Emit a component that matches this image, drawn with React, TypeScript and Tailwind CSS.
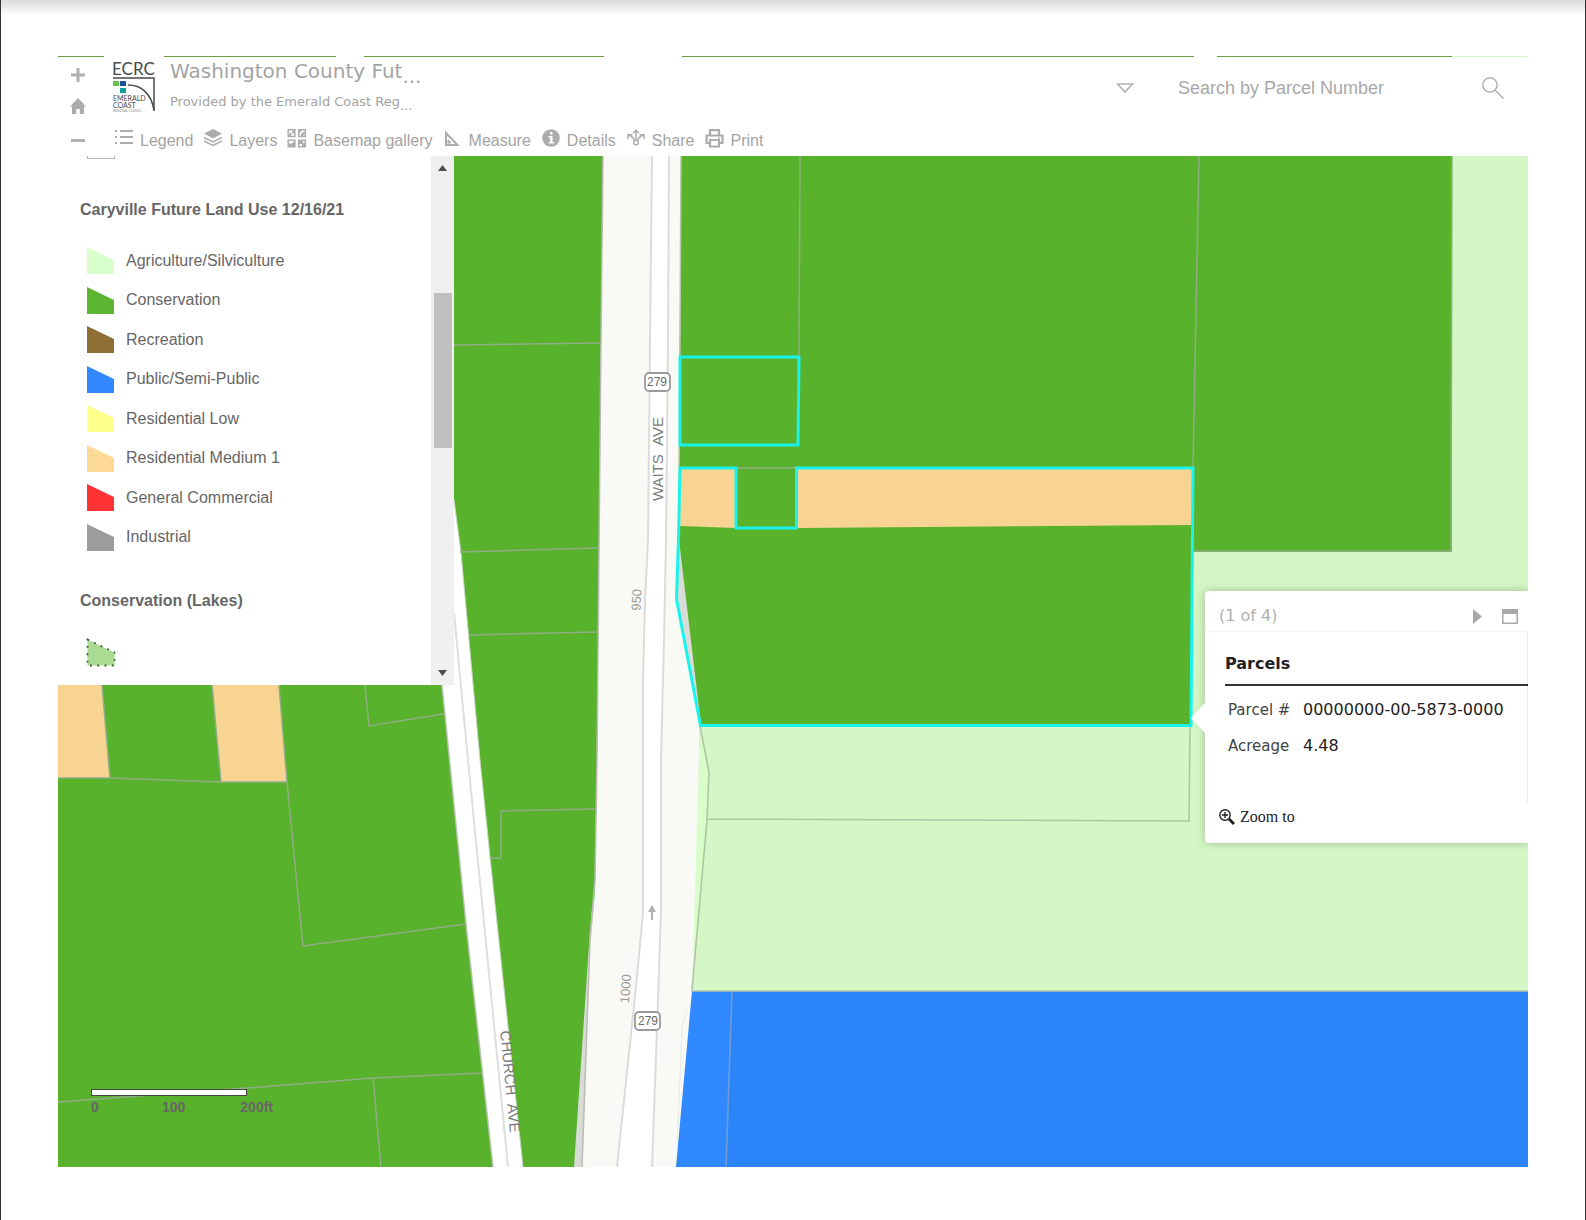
import React from 'react';

const LEGEND_ITEMS = [
  { label: 'Agriculture/Silviculture', color: '#d9ffcc' },
  { label: 'Conservation', color: '#5cb531' },
  { label: 'Recreation', color: '#8f6f35' },
  { label: 'Public/Semi-Public', color: '#3289ff' },
  { label: 'Residential Low', color: '#ffff8c' },
  { label: 'Residential Medium 1', color: '#fdda96' },
  { label: 'General Commercial', color: '#ff3333' },
  { label: 'Industrial', color: '#9c9c9c' },
];

const ListIcon = () => (
  <svg width="20" height="20" viewBox="0 0 20 20" fill="#acacac">
    <path d="M1 1h2v2H1zM1 7h2v2H1zM1 13h2v2H1zM6 1h13v2H6zM6 7h13v2H6zM6 13h13v2H6z" />
  </svg>
);

const LayersIcon = () => (
  <svg width="20" height="20" viewBox="0 0 20 20" fill="none" stroke="#acacac" strokeWidth="1.4">
    <path d="M10 0 19 4.500l-9 5-9-5z" fill="#acacac" stroke="none" />
    <path d="M1 8.500l9 4.500 9-4.500M1 12l9 4.500 9-4.500" />
  </svg>
);

const BasemapIcon = () => (
  <svg width="20" height="20" viewBox="0 0 20 20" fill="none" stroke="#acacac" strokeWidth="1.5">
    <path d="M1.2 .8h6.600v6.600H1.2zM11.7 .8h6.600v6.600h-6.600zM1.2 11.2h6.600v6.600H1.2zM11.7 11.2h6.600v6.600h-6.600z" />
    <path d="M1.500 7l2-4 1 2 1-3h2v3l-2-1-2 3zM12 1h3l-3 4zM14 7c0-3 1-4 4-4v1l-2 3zM2 17.500v-3h3l3-3v6zM12 12h4v2h2v4h-3v-3h-3z" fill="#acacac" stroke="none" />
  </svg>
);

const MeasureIcon = () => (
  <svg width="20" height="20" viewBox="0 0 20 20" fill="none" stroke="#acacac" strokeWidth="2">
    <path d="M3 4v12h11.500zM5.500 11v2.500H8" />
  </svg>
);

const InfoIcon = () => (
  <svg width="20" height="20" viewBox="0 0 20 20">
    <circle cx="10" cy="9" r="8.800" fill="#acacac" />
    <path d="M9 3h2.500v2.500H9zM7.500 7h4v6H13v1.500H7.500V13H9V8.500H7.500z" fill="#fff" />
  </svg>
);

const ShareIcon = () => (
  <svg width="20" height="20" viewBox="0 0 20 20" fill="none" stroke="#acacac" strokeWidth="1.500">
    <path d="M10 11V1.500M7.200 4 10 1.200 12.800 4M8.500 12C8 9 5.500 7 2.500 6.200M2 10V5.700h4.500M11.500 12c.5-3 3-5 6-5.800M18 10V5.700h-4.500" />
    <circle cx="10" cy="13.500" r="2.300" />
  </svg>
);

const PrintIcon = () => (
  <svg width="20" height="20" viewBox="0 0 20 20" fill="none" stroke="#acacac" strokeWidth="2.200">
    <path d="M6 6V1.200h9V6M6 14H2.500V6.500h16V14H15M6 11h9v6.500H6z" />
    <path d="M14 8.800h2" strokeWidth="1.200" />
  </svg>
);

const TOOLS = [
  { label: 'Legend', Icon: ListIcon },
  { label: 'Layers', Icon: LayersIcon },
  { label: 'Basemap gallery', Icon: BasemapIcon },
  { label: 'Measure', Icon: MeasureIcon },
  { label: 'Details', Icon: InfoIcon },
  { label: 'Share', Icon: ShareIcon },
  { label: 'Print', Icon: PrintIcon },
];

const Logo = () => (
  <svg className="-ml-1" width="48" height="54" viewBox="-3 -2 48 54" fontFamily="Lato, sans-serif" fill="#4a4a4a">
    <text x="-1" y="13" fontSize="17">ECRC</text>
    <path d="M0 16h41v33" fill="none" stroke="#4a4a4a" strokeWidth="1.500" />
    <path d="M15 23c13 0 23 8 26 25" fill="none" stroke="#4a4a4a" strokeWidth="1.500" />
    <rect y="19" width="6" height="5" fill="#6cbf45" />
    <rect x="7" y="19" width="6" height="5" fill="#17569b" />
    <rect x="7" y="26" width="6" height="5" fill="#0ca0a0" />
    <text x="0" y="39" fontSize="7">EMERALD</text>
    <text x="0" y="46" fontSize="7">COAST</text>
    <text x="0" y="50" fontSize="3" fill="#888">REGIONAL COUNCIL</text>
  </svg>
);

const MapCanvas = () => (
  <svg
    className="absolute inset-0 h-full w-full"
    viewBox="58 156 1470 1011"
    preserveAspectRatio="xMinYMin slice"
    fontFamily="'Liberation Sans', Arial, sans-serif"
  >
    <rect x="58" y="156" width="1470" height="1011" fill="#59b22c" />

    {/* agriculture */}
    <path d="M1452 156h76v840H690l10-270h491l2-174h259z" fill="#d5f7c5" />
    <path d="M700 726l9 46-2 48-15 171h-2l8-190z" fill="#d8ffca" />

    {/* public */}
    <path d="M691 991h837v176H676z" fill="#2c85f8" />
    <path d="M691 991h41l-6 176h-50z" fill="#3089ff" />

    {/* residential */}
    <path d="M680 468h56v60l-56-2zM797 468h396v57l-396 3zM58 685h44l8 93H58zM212 685h67l8 97h-66z" fill="#f8d492" />

    {/* highway corridor */}
    <path d="M595 880l-5 50-16 237h10l8-237z" fill="#d9dcd6" />
    <path d="M679 540l22 185-24-125z" fill="#d9dcd6" />
    <path d="M603 156l-2 184-4 420-2 130-5 60-8 217h94l16-176 7-230 1-35-24-127 2-60 1-80 2-303z" fill="#f9faf6" />
    <path d="M603 156l-2 184-4 420-2 120-5 60-8 227" fill="none" stroke="#b9bcb4" strokeWidth="1.500" />
    <path d="M681 156l-1 184-1 128" fill="none" stroke="#b9c4b0" strokeWidth="1.500" />
    <path d="M652 156l-2 184-2 200-3 60-2 80v234l-9 92-17 161h35l6-167 3-90V760l3-120 2-100 2-200 1-184z" fill="#fff" />
    <path
      d="M652 156l-2 184-2 200-3 60-2 80v234l-9 92-17 161M652 1167l6-167 3-90V760l3-120 2-100 2-200 1-184"
      fill="none"
      stroke="#dcdcdc"
      strokeWidth="2"
    />
    <path d="M687 1010l-5 18-5 122" fill="none" stroke="#e9eae2" strokeWidth="1" />

    {/* church ave */}
    <path d="M430 500h24l7 53 19 207 10 97 33 310h-30l-27-243-24-239-12-100z" fill="#fff" />
    <path d="M442 685l24 239 27 243" fill="none" stroke="#b9c4b0" strokeWidth="1.500" />
    <path d="M454 500l7 53 19 207 10 97 33 310" fill="none" stroke="#c9d8c0" strokeWidth="1" />
    <path d="M454 613l14 147 40 407" fill="none" stroke="#dedede" strokeWidth="2" />

    {/* parcel lines */}
    <g fill="none" stroke="#8fae84" strokeWidth="1.500">
      <path d="M454 345l147-2M460 552l138-4M469 635l128-3M490 858h11v-47l95-2" />
      <path d="M58 778h52l111 4h66l16 164 163-22M110 778l-8-93M221 782l-9-97M287 782l-8-97" />
      <path d="M365 685l4 41 74-12M58 1102l189-14 126-10 109-5M373 1078l8 89" />
      <path d="M800 156l-1 200M1199 156l-6 312M736 468h61M1452 156l-1 395h-258" />
    </g>
    <g fill="none" stroke="#afc5a6" strokeWidth="1.600">
      <path d="M700 726l9 46-2 48-15 170M707 819l482 2 1-94M691 991h837" />
    </g>
    <path d="M732 992l-6 175" stroke="#6d9fd6" strokeWidth="1.500" />

    {/* selected parcels */}
    <g fill="none" stroke="#18f4ec" strokeWidth="3">
      <path d="M680 357h119l-1 88H680z" />
      <path d="M680 468h56v60h60.500v-60h396.500l-2 257.500H700.500L676.500 599l2-60z" />
    </g>

    {/* road labels */}
    <g fontSize="15" fill="#7c7c7c" textAnchor="middle">
      <text transform="translate(663 459) rotate(-90)">WAITS{'\u00a0\u00a0'}AVE</text>
      <text transform="translate(505 1082) rotate(84.500)">CHURCH{'\u00a0\u00a0'}AVE</text>
    </g>
    <g fontSize="13" fill="#9a9a9a" textAnchor="middle">
      <text transform="translate(641 600) rotate(-88)">950</text>
      <text transform="translate(630 989) rotate(-86)">1000</text>
    </g>
    <g fill="#fff" stroke="#9a9a9a" strokeWidth="1.800">
      <rect x="645" y="373" width="25" height="18" rx="4" />
      <rect x="635" y="1012" width="25" height="18" rx="4" />
    </g>
    <g fontSize="12" fill="#666" textAnchor="middle">
      <text x="657" y="386">279</text>
      <text x="648" y="1025">279</text>
    </g>
    <path d="M652 905l4 7h-3v8h-2v-8h-3z" fill="#b0b0b0" />
  </svg>
);

const LegendPanel = () => (
  <aside className="relative flex h-[529px] w-[396px] bg-white text-base leading-6 text-[#666]">
    <div className="flex-1 overflow-hidden pl-[22px]">
      <div className="ml-[7px] h-[3px] w-7 border border-t-0 border-[#b5b5b5]" />
      <h2 className="mt-[39px] font-bold">Caryville Future Land Use 12/16/21</h2>
      <ul className="mt-[19px] flex h-[316px] flex-col">
        {LEGEND_ITEMS.map(({ label, color }) => (
          <li key={label} className="flex flex-1 items-center gap-3 pl-[7px]">
            <svg width="27" height="27" viewBox="0 0 27 27">
              <path d="M0 0l27 13v14H0z" fill={color} />
            </svg>
            {label}
          </li>
        ))}
      </ul>
      <h2 className="mt-8 font-bold">Conservation (Lakes)</h2>
      <svg className="mt-[25px] ml-1.5" width="30" height="30" viewBox="0 0 30 30">
        <path d="M1.500 1.500l27 13v13h-27z" fill="#a9db92" stroke="#3c5a32" strokeWidth="1.800" strokeDasharray="1.800 5.500" />
      </svg>
    </div>
    <div className="flex w-[23px] flex-col items-center bg-[#f0f0f0] pt-[9px] pb-[9px]">
      <svg width="9" height="6" viewBox="0 0 9 6">
        <path d="M0 6l4.500-6L9 6z" fill="#4d4d4d" />
      </svg>
      <div className="mt-[122px] h-[155px] w-[18px] bg-[#c0c0c0]" />
      <svg className="mt-auto" width="9" height="6" viewBox="0 0 9 6">
        <path d="M0 0l4.500 6L9 0z" fill="#4d4d4d" />
      </svg>
    </div>
  </aside>
);

const ParcelPopup = () => (
  <section className="absolute top-[435px] right-0 h-[252px] w-[323px] rounded-l bg-white font-['DejaVu_Sans',Verdana,sans-serif] text-base text-[#222] shadow-[0_0_10px_rgba(0,0,0,0.25)]">
    <svg className="absolute top-28 -left-[14px]" width="14" height="30" viewBox="0 0 14 30">
      <path d="M14 0v30L0 15z" fill="#fff" />
    </svg>
    <div className="flex h-[41px] items-center border-b border-[#f7f7f7] pt-2.5 pr-2.5 pl-3.5 text-[#b0b0b0]">
      <span className="flex-1">(1 of 4)</span>
      <button aria-label="Next feature" className="mr-5">
        <svg width="9" height="15" viewBox="0 0 9 15">
          <path d="M0 0l9 7.500L0 15z" fill="#a8a8a8" />
        </svg>
      </button>
      <button aria-label="Maximize">
        <svg width="16" height="15" viewBox="0 0 16 15">
          <path d="M0 0h16v15H0zM1.500 5v8.500h13V5z" fill="#a8a8a8" fillRule="evenodd" />
        </svg>
      </button>
    </div>
    <div className="h-[171px] border-r border-[#eceee0] pt-5 pl-5">
      <h3 className="-mr-px border-b-2 border-[#333] pb-2 leading-6 font-bold">Parcels</h3>
      <table className="mt-1.5 leading-9">
        <tbody>
          <tr>
            <th className="w-[78px] p-0 pl-[3px] text-left text-[15px] font-normal text-[#444]">Parcel #</th>
            <td className="p-0">00000000-00-5873-0000</td>
          </tr>
          <tr>
            <th className="p-0 pl-[3px] text-left text-[15px] font-normal text-[#444]">Acreage</th>
            <td className="p-0">4.48</td>
          </tr>
        </tbody>
      </table>
    </div>
    <a href="#zoom" className="ml-3.5 flex items-center gap-[5px] font-['Liberation_Serif',serif] leading-7">
      <svg width="16" height="16" viewBox="0 0 16 16" fill="none" stroke="#222">
        <circle cx="6" cy="6" r="5.200" strokeWidth="1.400" />
        <path d="M6 3v6M3 6h6" strokeWidth="1.400" />
        <path d="M10 10l5 5" strokeWidth="2.800" />
      </svg>
      Zoom to
    </a>
  </section>
);

const ScaleBar = () => (
  <div className="absolute bottom-[52px] left-[33px] w-[182px] text-sm leading-4 font-bold text-[#666]">
    <div className="h-[7px] w-[156px] border border-[#444] bg-white" />
    <div className="mt-[3px] flex justify-between">
      <span>0</span>
      <span className="pl-2">100</span>
      <span>200ft</span>
    </div>
  </div>
);

const Header = () => (
  <header className="flex h-[99px] text-[#a3a3a3]">
    <nav aria-label="Map zoom" className="flex w-10 flex-col items-center pt-[11px]">
      <button aria-label="Zoom in">
        <svg width="14" height="14" viewBox="0 0 14 14" stroke="#b0b0b0" strokeWidth="3">
          <path d="M7 0v14M0 7h14" />
        </svg>
      </button>
      <button aria-label="Default extent" className="mt-4">
        <svg width="16" height="16" viewBox="0 0 16 16" fill="#acacac">
          <path d="M8 0l8 8.500h-2V16H9.800v-5H6.200v5H2V8.500H0z" />
        </svg>
      </button>
      <button aria-label="Zoom out" className="mt-[25px]">
        <svg width="14" height="3" viewBox="0 0 14 3">
          <path d="M0 0h14v3H0z" fill="#b0b0b0" />
        </svg>
      </button>
    </nav>
    <div className="flex flex-1 flex-col pl-4">
      <div className="flex h-[62px] items-center">
        <div className="w-14 self-start pt-[3px]">
          <Logo />
        </div>
        <div className="flex-1 self-start pt-1 font-['DejaVu_Sans',Verdana,sans-serif] whitespace-nowrap">
          <h1 className="text-xl leading-5">
            Washington County Fut<span className="align-sub">...</span>
          </h1>
          <p className="mt-2 text-[13px] leading-4">
            Provided by the Emerald Coast Reg<span className="align-sub">...</span>
          </p>
        </div>
        <form className="mr-[23px] flex items-center">
          <button type="button" aria-label="Search source">
            <svg width="18" height="10" viewBox="0 0 18 10" fill="none" stroke="#b0b0b0" strokeWidth="1.600">
              <path d="M1.500 1h15L9 9z" />
            </svg>
          </button>
          <input
            aria-label="Search by Parcel Number"
            placeholder="Search by Parcel Number"
            className="ml-11 w-[286px] bg-transparent text-lg outline-none placeholder:text-[#a8a8a8]"
          />
          <button type="button" aria-label="Search" className="mr-px ml-[18px]">
            <svg width="22" height="22" viewBox="0 0 22 22" fill="none" stroke="#b0b0b0" strokeWidth="1.500">
              <circle cx="8" cy="8" r="7.200" />
              <path d="M13 13l8.500 8.500" />
            </svg>
          </button>
        </form>
      </div>
      <div className="flex h-[37px] gap-2.5 pt-2.5">
        {TOOLS.map(({ label, Icon }) => (
          <button key={label} className="flex items-start gap-1.5 text-base leading-6 whitespace-nowrap">
            <Icon />
            <span>{label}</span>
          </button>
        ))}
      </div>
    </div>
  </header>
);

const App: React.FC = () => (
  <div className="flex min-h-screen flex-col border-x border-[#333] bg-white px-[57px] pb-[53px] font-['Liberation_Sans',Arial,sans-serif]">
    <div className="-mx-[57px] h-4 bg-linear-to-b from-[#dcdcdc] to-white" />
    <svg className="mt-10 block h-px w-full" viewBox="58 0 1470 1" preserveAspectRatio="none">
      <path d="M58 0h46v1H58zM164 0h172v1H164zM364 0h240v1H364zM682 0h512v1H682zM1217 0h235v1h-235z" fill="#6a9f45" />
      <path d="M1452 0h76v1h-76z" fill="#d5f7c5" />
    </svg>
    <Header />
    <main className="relative flex-1 overflow-hidden">
      <MapCanvas />
      <LegendPanel />
      <ParcelPopup />
      <ScaleBar />
    </main>
  </div>
);

export default App;
